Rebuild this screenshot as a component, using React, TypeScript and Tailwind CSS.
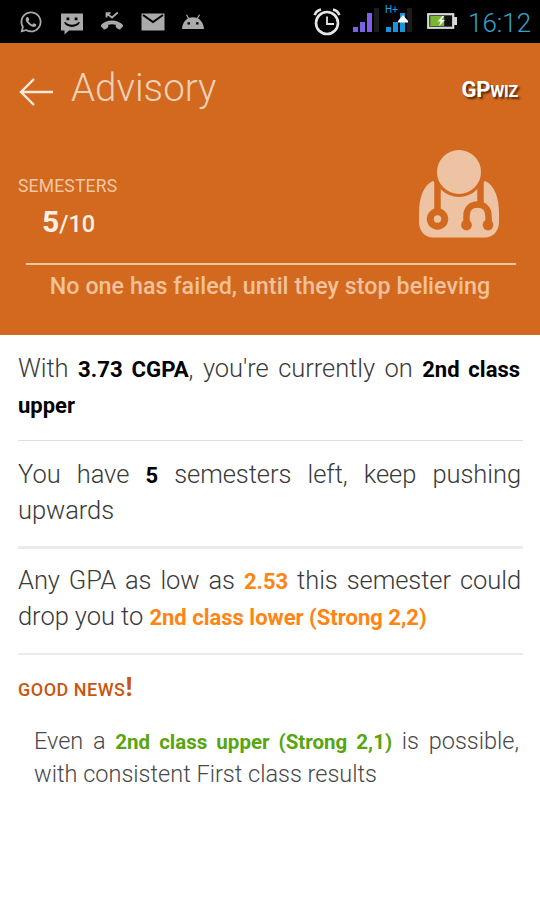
import type { ReactNode } from "react";
import { FaWhatsapp } from "react-icons/fa";
import { clsx } from "clsx";

const SIGNAL_BARS = [5, 10, 19];

function SmileMessage() {
  return (
    <svg viewBox="0 0 24 22" className="w-6 h-[22px]">
      <path
        fillRule="evenodd"
        fill="#aaaaaa"
        d="M1 .5h22v17H9L4.500 21.500V17.500H1zM6.500 4.500v2.800h2.800V4.500zM14.700 4.500v2.800h2.800V4.500zM4 9.600c1.500 2.900 4.400 4.300 8 4.300s6.500-1.400 8-4.300l-1.600-.6c-1.500 1.900-3.500 2.700-6.400 2.700s-4.900-.8-6.400-2.700z"
      />
    </svg>
  );
}

function MissedCall() {
  return (
    <svg viewBox="0 0 24 22" className="w-6 h-[22px]" fill="none" stroke="#aaaaaa">
      <path d="M6.500 6.500V2.200H10.500M6.800 2.500l5.200 4L17.800 1.500" strokeWidth="1.800" />
      <path
        fill="#aaaaaa"
        stroke="none"
        d="M12 9.500c-4.500 0-8.400 1.700-10.700 4.300-.6.700-.4 1.700.2 2.300l2 2c.6.600 1.400.6 2 .1l2.100-1.500c.5-.4.700-1 .7-1.500v-1.400c2.300-.8 5.100-.8 7.400 0v1.400c0 .6.200 1.100.7 1.500l2.100 1.500c.6.500 1.400.5 2-.1l2-2c.6-.6.800-1.600.2-2.300C20.400 11.200 16.500 9.500 12 9.500z"
      />
    </svg>
  );
}

function Mail() {
  return (
    <svg viewBox="0 0 24 18" className="w-6 h-[18px]">
      <path d="M.5.500h23v17H.5z" fill="#aaaaaa" />
      <path d="M2 2l10 7 10-7" fill="none" stroke="#000" strokeWidth="2" />
    </svg>
  );
}

function AndroidHead() {
  return (
    <svg viewBox="0 0 24 16" className="w-6 h-4">
      <path d="M5.500.8l2.300 4M18.500.8l-2.300 4" stroke="#aaaaaa" strokeWidth="1.300" />
      <path
        fillRule="evenodd"
        fill="#aaaaaa"
        d="M1 15C1.300 8 6 3.300 12 3.300S22.700 8 23 15zM6.500 8.200v2.400h2.400V8.200zM15.100 8.200v2.400h2.400V8.200z"
      />
    </svg>
  );
}

function Alarm() {
  return (
    <svg viewBox="0 0 28 28" className="w-7 h-7" fill="none" stroke="#e6e6e6">
      <circle cx="14" cy="15" r="11" strokeWidth="2.600" />
      <path d="M14 8.500V16h7" strokeWidth="1.800" />
      <path d="M1.700 7.200C2.500 4.500 4.500 2.500 8 1.600M26.300 7.200C25.500 4.500 23.500 2.500 20 1.600" strokeWidth="2.600" />
    </svg>
  );
}

function Signal({ data }: { data?: boolean }) {
  return (
    <div className="relative flex items-end gap-[2px] h-6 w-[26px]">
      {SIGNAL_BARS.map((h) => (
        <div
          key={h}
          className={clsx("w-[5px]", data ? "bg-[#1595dc]" : "bg-[#7c60e8]")}
          style={{ height: h }}
        />
      ))}
      <div className="absolute left-[21px] bottom-0 w-[5px] h-6 bg-[#1c1c1c]" />
      {data && (
        <>
          <span className="absolute -left-px -top-[3px] text-[10px] leading-[10px] text-[#1fa3e8]">H+</span>
          <svg viewBox="0 0 10 8" className="absolute left-[12px] top-[7px] w-[10px] h-2">
            <path d="M5 0l5 6v1.500H0V6z" fill="#fff" />
          </svg>
        </>
      )}
    </div>
  );
}

function Battery() {
  return (
    <svg viewBox="0 0 30 16" className="w-[30px] h-4">
      <rect x="1.200" y="1.200" width="25" height="13.600" fill="#111" stroke="#d8d8d8" strokeWidth="2.200" />
      <rect x="27" y="4" width="3" height="8" fill="#d8d8d8" />
      <rect x="3.200" y="3" width="14" height="10" fill="#76b82f" />
      <path d="M15.500 3l-5 5.500h3.200L12 13l6-6h-3.500L17 3z" fill="#fff" />
    </svg>
  );
}

function DoctorIcon() {
  return (
    <svg viewBox="0 0 80 88" className="w-20 h-[88px]">
      <path
        fill="#edc3a3"
        d="M14 31C4 35 0 49 0 63v9c0 9 6 15.500 14 15.500h52c8 0 14-6.500 14-15.500v-9c0-14-4-28-14-32C60 36 51 41 40 41S20 36 14 31z"
      />
      <g fill="none" stroke="#d2691e">
        <path d="M18.500 29v30" strokeWidth="6.500" />
        <path d="M61.500 29v26" strokeWidth="6.500" />
        <path d="M47.500 75V66c0-8 5-11.500 11-11.500S69.500 58 69.500 66v9" strokeWidth="6.500" />
      </g>
      <g fill="#d2691e">
        <circle cx="40" cy="22" r="25" />
        <circle cx="18.500" cy="69" r="10.700" />
        <circle cx="47.500" cy="75" r="5.400" />
        <circle cx="69" cy="75" r="5.400" />
      </g>
      <circle cx="40" cy="22" r="22" fill="#edc3a3" />
      <circle cx="18.500" cy="69" r="3.700" fill="#edc3a3" />
    </svg>
  );
}

function StatusBar() {
  return (
    <div className="flex items-center justify-between h-[43px] bg-black pl-[19px] pr-[10px]">
      <div className="flex items-center gap-[16.500px] text-[#aaaaaa]">
        <FaWhatsapp className="w-6 h-6" />
        <div className="pt-1"><SmileMessage /></div>
        <MissedCall />
        <Mail />
        <AndroidHead />
      </div>
      <div className="flex items-center">
        <Alarm />
        <div className="ml-[12px] -mt-[3px]"><Signal /></div>
        <div className="ml-[7px] -mt-[3px]"><Signal data /></div>
        <div className="ml-[15px] -mt-[2px]"><Battery /></div>
        <span className="ml-[11px] pt-[3px] w-[62px] text-right text-[26px] leading-8 font-light text-[#35a3c8] whitespace-nowrap">16:12</span>
      </div>
    </div>
  );
}

function Note({ children }: { children: ReactNode }) {
  return <p className="text-justify font-light text-[25.500px] leading-9 tracking-[-0.060px] text-[#3a3a3a]">{children}</p>;
}

function Strong({ children, className }: { children: ReactNode; className: string }) {
  return <b className={clsx("font-bold leading-none tracking-normal", className)}>{children}</b>;
}

export default function App() {
  return (
    <div className="w-[540px] h-[900px] bg-white overflow-hidden font-[Roboto,sans-serif]">
      <StatusBar />

      {/* Header */}
      <header className="flex flex-col h-[292px] bg-[#d2691e]">
        <div className="flex items-center h-[90px] pl-[19px] pr-[22px]">
          <svg viewBox="0 0 36 30" className="w-9 h-[30px] mt-[8px]" fill="none" stroke="#fbe9dc" strokeWidth="2.400">
            <path d="M34 15H2M15 2L2 15l13 13" />
          </svg>
          <h1 className="ml-4 font-light text-[38.500px] leading-[44px] text-[#efd0b8]">Advisory</h1>
          <span className="ml-auto mt-[4px] text-[22px] leading-6 font-bold tracking-[-0.200px] text-white [text-shadow:2px_2px_2px_#5a2a08]">
            GP<span className="text-[16px] leading-none">WIZ</span>
          </span>
        </div>

        <div className="flex justify-between pl-[18px] pr-[41px] h-[130px]">
          <div className="pt-[42px]">
            <div className="text-[17.500px] leading-[22px] tracking-[0.200px] text-[#f2c7a5]">SEMESTERS</div>
            <div className="pl-[24px] pt-[10px] leading-8 font-medium text-[23.500px] text-[#fff0e4]">
              <span className="text-[30px] leading-none font-bold">5</span>/10
            </div>
          </div>
          <div className="pt-[17px]"><DoctorIcon /></div>
        </div>

        <div className="mr-6 ml-[26px] h-[2px] bg-[#f3c6a4]" />
        <p className="pt-[7px] text-center text-[23.250px] leading-7 font-medium tracking-[0.050px] text-[#f3c19b]">
          No one has failed, until they stop believing
        </p>
      </header>

      {/* Advice */}
      <main className="pl-[18px] pr-[17px]">
        <div className="pt-[15px] h-[105px] pr-[3px]">
          <Note>
            With <Strong className="text-[22.200px] text-black">3.73 CGPA</Strong>, you're currently on{" "}
            <Strong className="text-[22px] text-black">2nd class upper</Strong>
          </Note>
        </div>
        <div className="pt-[15px] h-[106px] pr-[2px] border-t border-[#dedede]">
          <Note>
            You have <Strong className="text-[22px] text-black">5</Strong> semesters left, keep pushing upwards
          </Note>
        </div>
        <div className="pt-[13px] h-[107px] pr-[2px] border-t-[3px] border-[#ebebeb]">
          <Note>
            Any GPA as low as <Strong className="text-[22px] text-[#ff8412]">2.53</Strong> this semester could drop you to{" "}
            <Strong className="text-[22px] text-[#ff8412]">2nd class lower (Strong 2,2)</Strong>
          </Note>
        </div>
        <div className="border-t-2 border-[#ebebeb] pt-[19px]">
          <h2 className="text-[18px] leading-8 font-medium tracking-[0.500px] text-[#c8560f]">
            GOOD NEWS<span className="text-[26px] leading-none font-bold">!</span>
          </h2>
          <div className="pl-[16px] pr-1 pt-[19px]">
            <p className="text-justify font-light text-[23.500px] leading-[33px] text-[#484848]">
              Even a <Strong className="text-[20.500px] text-[#58a510]">2nd class upper (Strong 2,1)</Strong> is possible, with
              consistent First class results
            </p>
          </div>
        </div>
      </main>
    </div>
  );
}
